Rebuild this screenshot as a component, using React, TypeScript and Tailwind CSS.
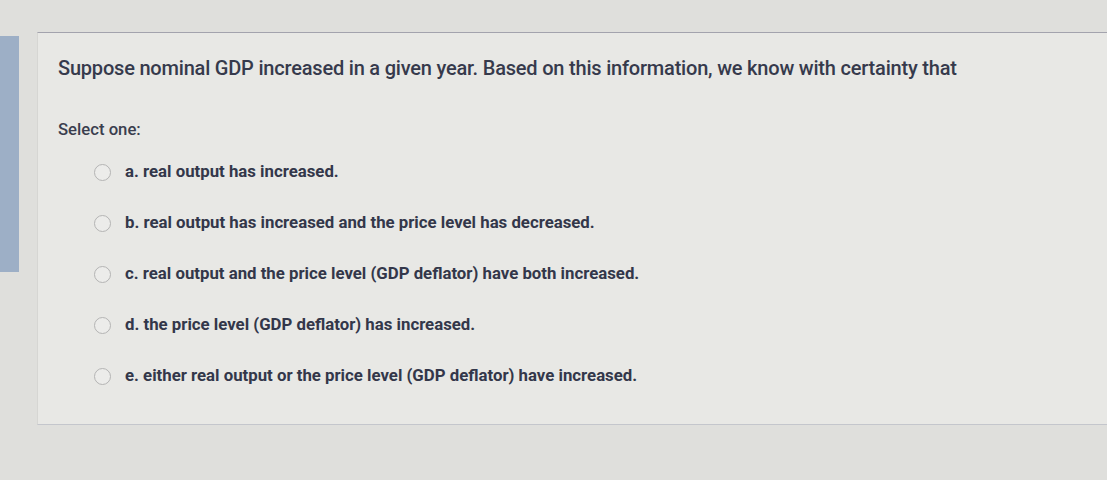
import React from 'react';

const options = [
  'a. real output has increased.',
  'b. real output has increased and the price level has decreased.',
  'c. real output and the price level (GDP deflator) have both increased.',
  'd. the price level (GDP deflator) has increased.',
  'e. either real output or the price level (GDP deflator) have increased.',
];

export default function App() {
  return (
    <div className="relative h-[480px] w-[1107px] overflow-hidden bg-[#dfdfdc] font-['Roboto',sans-serif]">
      <div className="absolute left-0 top-[36px] h-[236px] w-[19px] bg-[#9dafc6]" />
      <div className="ml-[37px] mt-[32px] h-[393px] border-l border-t border-l-[#d6d6d3] border-t-[#a3a3ad] bg-[#e8e8e5] border-b border-b-[#c4c6cc] pl-[20px] pt-[23px]">
        <p className="text-[20px] leading-[24px] font-medium tracking-[-0.2px] text-[#363a4c]">
          Suppose nominal GDP increased in a given year. Based on this information, we know with certainty that
        </p>
        <p className="mt-[40px] text-[16.7px] leading-[20px] font-medium text-[#3a3e4e]">Select one:</p>
        <div className="mt-[23px] flex flex-col gap-[33px] pl-[36px]">
          {options.map((o) => (
            <div key={o} className="flex h-[18px] items-center gap-[14px]">
              <span className="h-[17px] w-[17px] shrink-0 rounded-full border-[1.5px] border-[#b4b4b4] bg-[#ececea]" />
              <span className="text-[16.8px] font-bold text-[#33374a]">{o}</span>
            </div>
          ))}
        </div>
      </div>
    </div>
  );
}
